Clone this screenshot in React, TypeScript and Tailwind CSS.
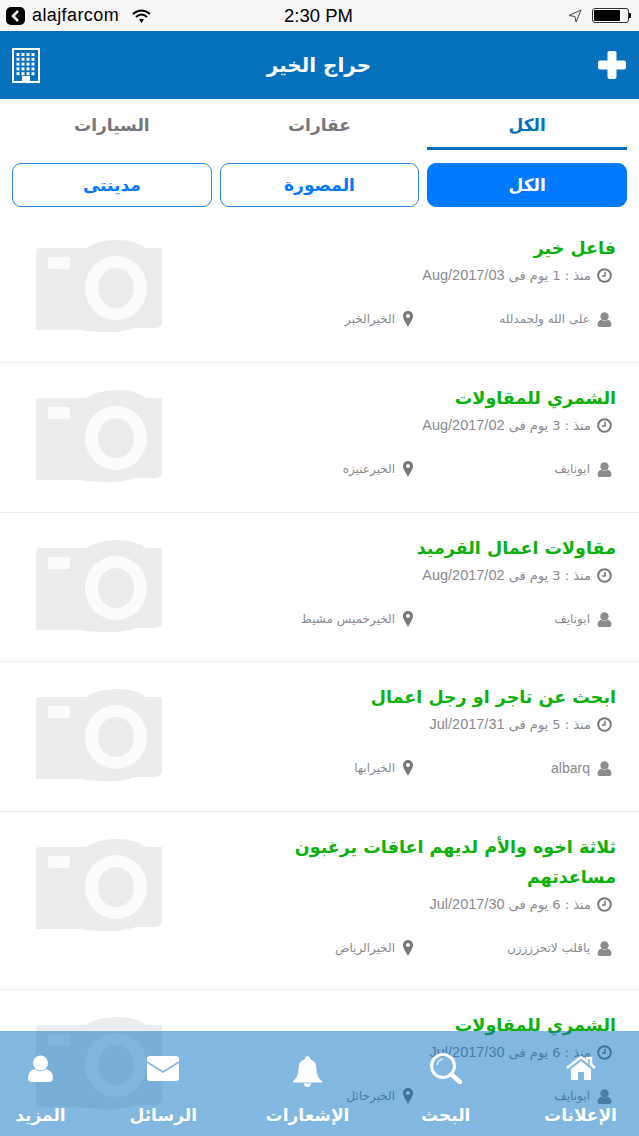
const listings = [
  { title: 'فاعل خير', ago: 'منذ : 1 يوم فى', date: 'Aug/2017/03', user: 'على الله ولحمدلله', place: 'الخيرالخبر', h: 'h-[150px]' },
  { title: 'الشمري للمقاولات', ago: 'منذ : 3 يوم فى', date: 'Aug/2017/02', user: 'ابونايف', place: 'الخيرعنيزه', h: 'h-[150px]' },
  { title: 'مقاولات اعمال القرميد', ago: 'منذ : 3 يوم فى', date: 'Aug/2017/02', user: 'ابونايف', place: 'الخيرخميس مشيط', h: 'h-[149px]' },
  { title: 'ابحث عن تاجر او رجل اعمال', ago: 'منذ : 5 يوم فى', date: 'Jul/2017/31', user: 'albarq', place: 'الخيرابها', h: 'h-[150px]' },
  { title: 'ثلاثة اخوه والأم لديهم اعاقات يرغبون مساعدتهم', ago: 'منذ : 6 يوم فى', date: 'Jul/2017/30', user: 'ياقلب لاتحززززن', place: 'الخيرالرياض', h: 'h-[178px]' },
  { title: 'الشمري للمقاولات', ago: 'منذ : 6 يوم فى', date: 'Jul/2017/30', user: 'ابونايف', place: 'الخيرحائل', h: 'h-[150px]' },
];

const CameraPlaceholder = () => (
  <svg width="126" height="93" viewBox="0 0 126 93" className="shrink-0">
    <path d="M0 11 Q0 8 4 8 L50 8 Q62 0 80 0 Q100 0 110 8 L126 8 L126 84 Q124 88 118 88 L100 88 Q85 93 70 92 Q55 92 45 90 L0 90 Z" fill="#ececef" />
    <rect x="12" y="17" width="22" height="12" rx="2" fill="#fbfbfc" />
    <ellipse cx="80" cy="48" rx="31" ry="32" fill="#fbfbfc" />
    <ellipse cx="80" cy="48" rx="18" ry="20" fill="#ececef" />
  </svg>
);

const ClockIcon = () => (
  <svg width="15" height="15" viewBox="0 0 15 15" className="shrink-0">
    <circle cx="7.500" cy="7.500" r="6.300" fill="none" stroke="#77777c" strokeWidth="2" />
    <path d="M8 3.800 V8 H5" fill="none" stroke="#77777c" strokeWidth="1.500" />
  </svg>
);

const PersonIcon = ({ size = 15, color = '#8b8b90' }: { size?: number; color?: string }) => (
  <svg width={size} height={size} viewBox="0 0 25 27" className="shrink-0">
    <circle cx="12.500" cy="8" r="7.500" fill={color} />
    <path d="M7 14 Q12.500 18.500 18 14 Q25 15.500 25 23 Q25 27 21 27 H4 Q0 27 0 23 Q0 15.500 7 14 Z" fill={color} />
  </svg>
);

const PinIcon = () => (
  <svg width="10" height="16" viewBox="0 0 10 16" className="shrink-0">
    <path fillRule="evenodd" d="M5 0 C8 0 10 2.200 10 5 C10 8 7 12 5 16 C3 12 0 8 0 5 C0 2.200 2 0 5 0 Z M5 3 A2 2 0 1 0 5 7 A2 2 0 1 0 5 3 Z" fill="#77777c" />
  </svg>
);

const Listing = ({ item }: { item: (typeof listings)[number] }) => (
  <div className={`${item.h} border-b border-[#ececec] flex pl-9 pr-[23px] pt-[20px] justify-between`}>
    <div className="pt-[7px]">
      <CameraPlaceholder />
    </div>
    <div dir="rtl" className="w-[340px]">
      <h3 className="text-[17.5px] leading-[30px] font-bold text-[#0bb00b]">{item.title}</h3>
      <div className="flex items-center gap-[6px] pr-[4px] mt-[2px] text-[13px] leading-[20px] text-[#8a8a8e]">
        <ClockIcon />
        <span>
          {item.ago} <span className="text-[14.5px] font-['Liberation_Sans',sans-serif]" dir="ltr">{item.date}</span>
        </span>
      </div>
      <div className="flex items-center pr-[4px] mt-[24px] text-[12px] leading-[18px] text-[#8a8a8e]">
        <div className="w-[199px] flex items-center gap-[7px]">
          <PersonIcon />
          <span className={item.user === 'albarq' ? "text-[14px] font-['Liberation_Sans',sans-serif]" : ''}>{item.user}</span>
        </div>
        <div className="flex items-center gap-[8px]">
          <PinIcon />
          <span>{item.place}</span>
        </div>
      </div>
    </div>
  </div>
);

const tabs = [
  {
    label: 'الإعلانات',
    width: 'w-[79px]',
    icon: (
      <svg width="30" height="24" viewBox="0 0 30 24">
        <path d="M1 12 L15 1 L21 5.500 V2 H25 V8.500 L29 12" fill="none" stroke="white" strokeWidth="2.500" />
        <path fillRule="evenodd" d="M5 13 L15 5 L25 13 V24 H18 V16 H12 V24 H5 Z" fill="white" />
      </svg>
    ),
  },
  {
    label: 'البحث',
    width: 'w-[54px]',
    icon: (
      <svg width="32" height="31" viewBox="0 0 32 31">
        <circle cx="13" cy="13" r="11.500" fill="none" stroke="white" strokeWidth="3" />
        <path d="M21.500 21.500 L30 29" stroke="white" strokeWidth="4.500" strokeLinecap="round" />
        <path d="M7 12 Q8 7 13 6" fill="none" stroke="white" strokeWidth="1.200" />
      </svg>
    ),
  },
  {
    label: 'الإشعارات',
    width: 'w-[86px]',
    icon: (
      <svg width="29" height="31" viewBox="0 0 29 31" className="mt-[6px]">
        <path d="M14.500 0 Q17 0 17 3 Q23.500 5 23.500 13 Q23.500 21 29 25.500 V26.500 H0 V25.500 Q5.500 21 5.500 13 Q5.500 5 12 3 Q12 0 14.500 0 Z" fill="white" />
        <path d="M10.500 27.500 H18.500 Q17.500 31 14.500 31 Q11.500 31 10.500 27.500 Z" fill="white" />
      </svg>
    ),
  },
  {
    label: 'الرسائل',
    width: 'w-[66px]',
    icon: (
      <svg width="32" height="25" viewBox="0 0 32 25">
        <rect width="32" height="25" rx="3" fill="white" />
        <path d="M0 6 L16 16 L32 6" fill="none" stroke="#82b6e2" strokeWidth="1.500" />
      </svg>
    ),
  },
  { label: 'المزيد', width: 'w-[43px]', icon: <PersonIcon size={27} color="white" /> },
];

export default function App() {
  return (
    <div className="relative w-[639px] h-[1136px] overflow-hidden bg-white font-['DejaVu_Sans',sans-serif]">
      {/* Status bar */}
      <div className="h-[31px] bg-[#f7f7f7] flex items-center justify-between pl-[6px] pr-[8px] text-black font-['Liberation_Sans',sans-serif]">
        <div className="flex items-center w-[200px]">
          <span className="w-[19px] h-[18px] rounded-[5px] bg-black flex items-center justify-center">
            <svg width="9" height="12" viewBox="0 0 9 12">
              <path d="M7 1 L2 6 L7 11" fill="none" stroke="white" strokeWidth="2.500" />
            </svg>
          </span>
          <span className="text-[18px] ml-[7px] tracking-[0.4px]">alajfarcom</span>
          <svg width="19" height="14" viewBox="0 0 19 14" className="ml-[13px]">
            <path d="M1 5 Q9.500 -2 18 5 M4 8 Q9.500 3 15 8" fill="none" stroke="black" strokeWidth="2" />
            <path d="M7 10.500 Q9.500 9 12 10.500 L9.500 14 Z" fill="black" />
          </svg>
        </div>
        <span className="text-[18.5px]">2:30 PM</span>
        <div className="flex items-center justify-end gap-[10px] w-[200px]">
          <svg width="14" height="14" viewBox="0 0 14 14">
            <path d="M13 1 L1 6.500 L7 7.500 L8 13 Z" fill="none" stroke="#444" strokeWidth="1" />
          </svg>
          <span className="flex items-center">
            <span className="w-[37px] h-[15px] border border-[#333] rounded-[3px] p-[1px] flex">
              <span className="block w-[26px] h-full bg-black rounded-[1px]" />
            </span>
            <span className="w-[2px] h-[5px] bg-black rounded-r-[1px]" />
          </span>
        </div>
      </div>

      {/* Header */}
      <div className="h-[68px] bg-[#0571bc] flex items-center justify-between pl-[12px] pr-[13px] text-white">
        <svg width="28" height="35" viewBox="0 0 28 35">
          <rect x="1" y="1" width="26" height="33" fill="none" stroke="white" strokeWidth="2" />
          {[0, 1, 2, 3, 4].map((r) =>
            [0, 1, 2, 3].map((c) => <rect key={`${r}-${c}`} x={4.500 + c * 5} y={5 + r * 4.800} width="3" height="3" fill="white" />),
          )}
          <rect x="10" y="28" width="8" height="6" fill="white" />
        </svg>
        <span dir="rtl" className="text-[20px] font-bold">حراج الخير</span>
        <svg width="28" height="28" viewBox="0 0 28 28">
          <rect x="9.500" y="0" width="9" height="28" rx="2" fill="white" />
          <rect x="0" y="9.500" width="28" height="9" rx="2" fill="white" />
        </svg>
      </div>

      {/* Category tabs */}
      <div dir="rtl" className="h-[51px] grid grid-cols-3 gap-2 px-3 text-[17px] font-bold text-center text-[#77777a]">
        <div className="h-[51px] pt-[5px] leading-[43px] border-b-[3px] border-[#0571bc] text-[#0571bc]">الكل</div>
        <div className="h-[51px] pt-[5px] leading-[43px]">عقارات</div>
        <div className="h-[51px] pt-[5px] leading-[43px]">السيارات</div>
      </div>

      {/* Filters */}
      <div dir="rtl" className="grid grid-cols-3 gap-2 px-3 mt-[13px] text-[17px] font-bold text-center">
        <div className="h-[44px] leading-[43px] rounded-[9px] border-[1.5px] border-[#007aff] bg-[#007aff] text-white">الكل</div>
        <div className="h-[44px] leading-[43px] rounded-[9px] border-[1.5px] border-[#2a85e0] text-[#007aff]">المصورة</div>
        <div className="h-[44px] leading-[43px] rounded-[9px] border-[1.5px] border-[#2a85e0] text-[#007aff]">مدينتى</div>
      </div>

      {/* Listings */}
      <div className="mt-[6px]">
        {listings.map((item, i) => (
          <Listing key={i} item={item} />
        ))}
      </div>

      {/* Bottom tab bar */}
      <div dir="rtl" className="absolute bottom-0 inset-x-0 h-[105px] bg-[#0670c0]/50 flex justify-between px-[19px] text-white">
        {tabs.map((t) => (
          <div key={t.label} className={`${t.width} flex flex-col items-center pt-[17px]`}>
            <div className="h-[40px] flex items-center justify-center">{t.icon}</div>
            <span className="text-[17px] leading-[20px] font-bold mt-[17px] whitespace-nowrap">{t.label}</span>
          </div>
        ))}
      </div>
    </div>
  );
}
